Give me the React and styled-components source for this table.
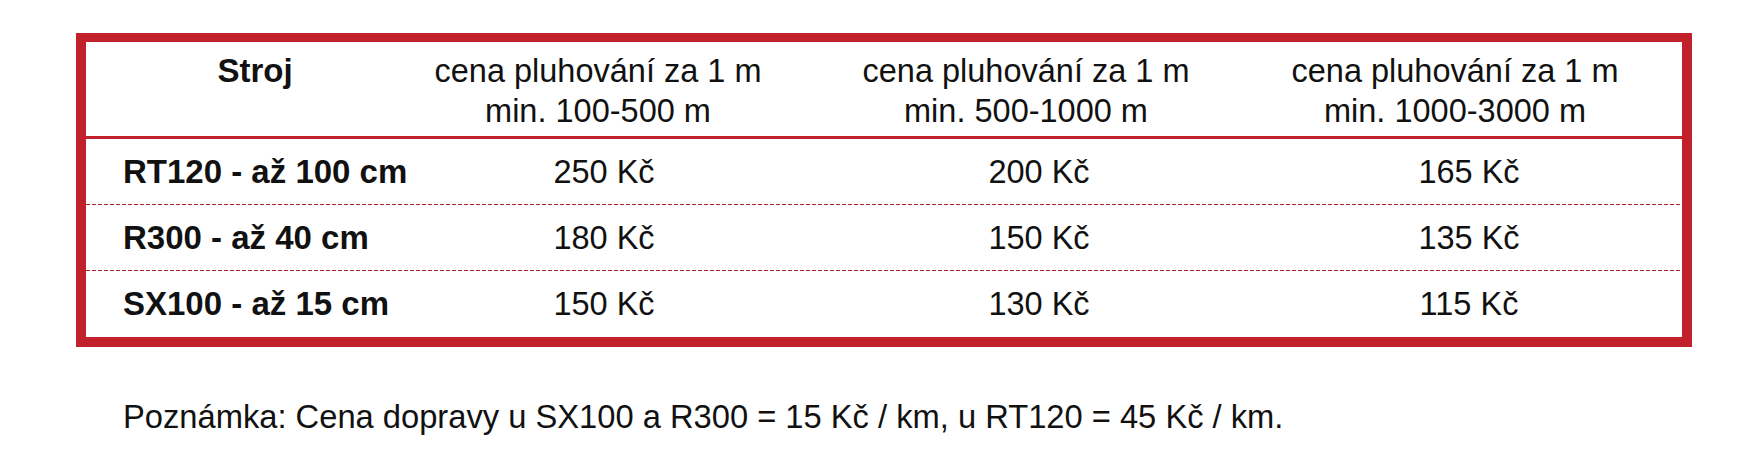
import React from 'react';
import styled, { createGlobalStyle } from 'styled-components';

const RED = '#c0212b';

const rows = [
  { name: 'RT120 - až 100 cm', prices: ['250 Kč', '200 Kč', '165 Kč'] },
  { name: 'R300 - až 40 cm', prices: ['180 Kč', '150 Kč', '135 Kč'] },
  { name: 'SX100 - až 15 cm', prices: ['150 Kč', '130 Kč', '115 Kč'] },
];

const ranges = ['100-500', '500-1000', '1000-3000'];

const App = () => {
  return (
    <>
      <GlobalStyle />
      <Page>
        <Table>
          <HeaderRow>
            <HeadCell first>Stroj</HeadCell>
            {ranges.map((r) => (
              <HeadCell key={r}>
                cena pluhování za 1 m
                <br />
                min. {r} m
              </HeadCell>
            ))}
          </HeaderRow>
          {rows.map((row, i) => (
            <Row key={row.name} last={i === rows.length - 1}>
              <NameCell>{row.name}</NameCell>
              {row.prices.map((p, j) => (
                <PriceCell key={j}>{p}</PriceCell>
              ))}
            </Row>
          ))}
        </Table>
        <Note>Poznámka: Cena dopravy u SX100 a R300 = 15 Kč / km, u RT120 = 45 Kč / km.</Note>
      </Page>
    </>
  );
};

const GlobalStyle = createGlobalStyle`
  html, body {
    margin: 0;
    padding: 0;
    background: #fff;
  }
  body {
    font-family: "Liberation Sans", Arial, sans-serif;
    color: #111;
  }
`;

const Page = styled.div`
  padding: 33px 53px 0 76px;
`;

const Table = styled.div`
  width: 1616px;
  box-sizing: border-box;
  border: 10px solid ${RED};
  border-top-width: 9px;
  background: #fff;
`;

const HeaderRow = styled.div`
  display: grid;
  grid-template-columns: 300px 424px 432px 426px;
  padding: 9px 0 5px;
  border-bottom: 3px solid ${RED};
`;

const HeadCell = styled.div`
  font-size: ${(p) => (p.first ? '33px' : '32.5px')};
  line-height: 40px;
  text-align: center;
  font-weight: ${(p) => (p.first ? 700 : 400)};
  padding-left: ${(p) => (p.first ? '38px' : '0')};
`;

const Row = styled.div`
  display: grid;
  grid-template-columns: 300px 436px 434px 1fr;
  align-items: center;
  height: 66px;
  box-sizing: border-box;
  padding-bottom: 1px;
  background-image: ${(p) =>
    p.last ? 'none' : `repeating-linear-gradient(90deg, #a8242b 0 4px, transparent 4px 6px)`};
  background-size: 100% 1px;
  background-position: left bottom;
  background-repeat: no-repeat;
`;

const NameCell = styled.div`
  font-size: 33px;
  line-height: 40px;
  font-weight: 700;
  padding-left: 37px;
  white-space: nowrap;
`;

const PriceCell = styled.div`
  font-size: 32.5px;
  line-height: 40px;
  text-align: center;
`;

const Note = styled.p`
  margin: 50px 0 0;
  padding-left: 47px;
  font-size: 32.7px;
  line-height: 40px;
`;

export default App;
